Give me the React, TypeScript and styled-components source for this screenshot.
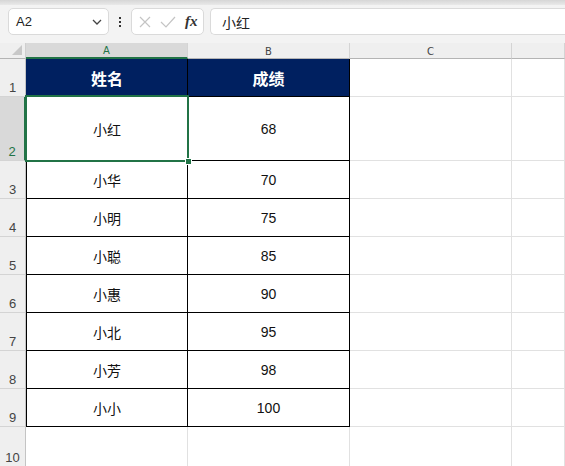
import styled, { createGlobalStyle } from "styled-components";

const GREEN = "#217346";
const NAVY = "#002060";
const GRID = "#e1e1e1";
const HEAD_BG = "#efefef";
const HEAD_SEL = "#d9d9d9";

const GlobalStyle = createGlobalStyle`
	html, body {
		margin: 0;
		padding: 0;
		background: #f3f3f3;
		font-family: "Liberation Sans", "Noto Sans CJK SC", sans-serif;
		overflow: hidden;
	}
`;

const rows = [
	{ name: "小红", score: "68" },
	{ name: "小华", score: "70" },
	{ name: "小明", score: "75" },
	{ name: "小聪", score: "85" },
	{ name: "小惠", score: "90" },
	{ name: "小北", score: "95" },
	{ name: "小芳", score: "98" },
	{ name: "小小", score: "100" },
];

const App = () => {
	return (
		<Page>
			<GlobalStyle />
			<TopStrip />
			<FormulaBar>
				<NameBox>
					<span>A2</span>
					<svg width="12" height="12" viewBox="0 0 12 12">
						<path d="M2 4 L6 8 L10 4" fill="none" stroke="#444" strokeWidth="1.3" />
					</svg>
				</NameBox>
				<Dots>
					<i />
					<i />
					<i />
				</Dots>
				<FxBox>
					<svg width="14" height="14" viewBox="0 0 14 14">
						<path d="M2 2 L12 12 M12 2 L2 12" stroke="#c4c4c4" strokeWidth="1.2" />
					</svg>
					<svg width="16" height="14" viewBox="0 0 16 14">
						<path d="M1 7 L6 12 L15 2" fill="none" stroke="#c4c4c4" strokeWidth="1.2" />
					</svg>
					<Fx>fx</Fx>
				</FxBox>
				<FormulaInput>小红</FormulaInput>
			</FormulaBar>
			<Sheet>
				<Corner>
					<svg width="10" height="10" viewBox="0 0 10 10">
						<path d="M10 0 L10 10 L0 10 Z" fill="#c8c8c8" />
					</svg>
				</Corner>
				<ColHead $selected>A</ColHead>
				<ColHead>B</ColHead>
				<ColHead>C</ColHead>
				<ColHead />

				<RowHead>1</RowHead>
				<Cell $head $first>姓名</Cell>
				<Cell $head>成绩</Cell>
				<Cell />
				<Cell />

				{rows.map((r, i) => (
					<Row key={r.name}>
						<RowHead $selected={i === 0}>{i + 2}</RowHead>
						<Cell $table $first>
							{r.name}
							{i === 0 && (
								<Selection>
									<FillHandle />
								</Selection>
							)}
						</Cell>
						<Cell $table>{r.score}</Cell>
						<Cell />
						<Cell />
					</Row>
				))}

				<RowHead>10</RowHead>
				<Cell />
				<Cell />
				<Cell />
				<Cell />
			</Sheet>
		</Page>
	);
};

const Page = styled.div`
	width: 565px;
	height: 466px;
	overflow: hidden;
	display: flex;
	flex-direction: column;
`;

const TopStrip = styled.div`
	flex-shrink: 0;
	height: 5px;
	background: linear-gradient(#d6d6d6, #e9e9e9);
`;

const FormulaBar = styled.div`
	flex-shrink: 0;
	display: flex;
	align-items: center;
	height: 27px;
	padding: 3px 0 8px 8px;
`;

const NameBox = styled.div`
	box-sizing: border-box;
	width: 101px;
	height: 27px;
	background: #fff;
	border: 1px solid #dadada;
	border-radius: 5px;
	display: flex;
	align-items: center;
	justify-content: space-between;
	padding: 0 5px 0 7px;
	font-size: 13px;
	color: #222;
`;

const Dots = styled.div`
	width: 22px;
	display: flex;
	flex-direction: column;
	align-items: center;
	gap: 2px;

	i {
		width: 2px;
		height: 2px;
		background: #333;
	}
`;

const FxBox = styled.div`
	box-sizing: border-box;
	width: 73px;
	height: 27px;
	background: #fff;
	border: 1px solid #dadada;
	border-radius: 5px;
	display: flex;
	align-items: center;
	gap: 8px;
	padding: 0 5px 0 6px;
`;

const Fx = styled.span`
	font-family: "Liberation Serif", serif;
	font-style: italic;
	font-weight: 700;
	font-size: 15px;
	color: #333;
	margin-left: 1px;
`;

const FormulaInput = styled.div`
	box-sizing: border-box;
	flex: 1;
	margin-left: 6px;
	height: 27px;
	background: #fff;
	border: 1px solid #dadada;
	border-right: none;
	border-radius: 5px 0 0 5px;
	display: flex;
	align-items: center;
	padding-left: 11px;
	font-size: 14px;
	color: #222;
`;

const Sheet = styled.div`
	flex-shrink: 0;
	display: grid;
	grid-template-columns: 26px 162px 162px 162px 1fr;
	grid-template-rows: 16px 38px 64px repeat(7, 38px) 40px;
	background: #fff;
`;

const Row = styled.div`
	display: contents;
`;

const Corner = styled.div`
	box-sizing: border-box;
	background: ${HEAD_BG};
	border-right: 1px solid #cfcfcf;
	border-bottom: 1px solid #b4b4b4;
	display: flex;
	align-items: flex-end;
	justify-content: flex-end;
	padding: 0 3px 3px 0;
`;

const ColHead = styled.div<{ $selected?: boolean }>`
	box-sizing: border-box;
	background: ${(p) => (p.$selected ? HEAD_SEL : HEAD_BG)};
	border-right: 1px solid #d4d4d4;
	border-bottom: ${(p) => (p.$selected ? `2px solid ${GREEN}` : "1px solid #b4b4b4")};
	color: ${(p) => (p.$selected ? GREEN : "#444")};
	font-family: "DejaVu Sans", sans-serif;
	font-size: 10px;
	display: flex;
	align-items: center;
	justify-content: center;
	padding-top: 1px;
`;

const RowHead = styled.div<{ $selected?: boolean }>`
	box-sizing: border-box;
	background: ${(p) => (p.$selected ? HEAD_SEL : HEAD_BG)};
	border-right: ${(p) => (p.$selected ? `2px solid ${GREEN}` : "1px solid #c4c4c4")};
	border-bottom: 1px solid #d4d4d4;
	color: ${(p) => (p.$selected ? GREEN : "#444")};
	font-size: 13px;
	display: flex;
	align-items: flex-end;
	justify-content: center;
	padding-bottom: 1px;
`;

const Cell = styled.div<{ $head?: boolean; $table?: boolean; $first?: boolean }>`
	position: relative;
	box-sizing: border-box;
	display: flex;
	align-items: center;
	justify-content: center;
	font-size: ${(p) => (p.$head ? "16px" : "14px")};
	font-weight: ${(p) => (p.$head ? 700 : 400)};
	color: ${(p) => (p.$head ? "#fff" : "#111")};
	background: ${(p) => (p.$head ? NAVY : "#fff")};
	border-right: 1px solid ${(p) => (p.$head || p.$table ? "#000" : GRID)};
	border-bottom: 1px solid ${(p) => (p.$head || p.$table ? "#000" : GRID)};
	border-left: ${(p) => (p.$first ? `1px solid ${p.$head ? NAVY : "#000"}` : "none")};
`;

const Selection = styled.div`
	position: absolute;
	z-index: 2;
	top: -2px;
	left: -2px;
	right: -2px;
	bottom: -2px;
	border: 2px solid ${GREEN};
	pointer-events: none;
`;

const FillHandle = styled.div`
	position: absolute;
	right: -5px;
	bottom: -5px;
	width: 5px;
	height: 5px;
	background: ${GREEN};
	border: 1px solid #fff;
`;

export default App;
